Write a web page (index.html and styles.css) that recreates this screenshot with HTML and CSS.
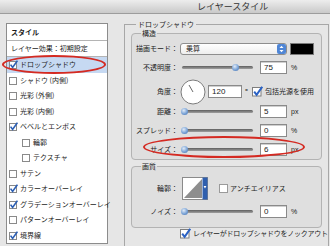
FILE: index.html
```html
<!DOCTYPE html>
<html lang="ja">
<head>
<meta charset="utf-8">
<title>レイヤースタイル</title>
<link rel="stylesheet" href="styles.css">
</head>
<body>
<div class="titlebar"><span class="title">レイヤースタイル</span></div>
<div class="main">
  <div class="side">
    <div class="side-head">スタイル</div>
    <div class="side-preset">レイヤー効果：初期設定</div>
    <ul class="fx">
      <li class="fx-item sel"><svg class="cb" viewBox="0 0 9 9"><rect x="0.5" y="1.5" width="7" height="7" fill="#fff" stroke="#8a8a8a"/><path d="M1.6 4.6 L3.6 7.4 L8.4 0.6" fill="none" stroke="#2c5fb4" stroke-width="1.6"/></svg>ドロップシャドウ</li>
      <li class="fx-item"><svg class="cb" viewBox="0 0 9 9"><rect x="0.5" y="1.5" width="7" height="7" fill="#fff" stroke="#8a8a8a"/></svg>シャドウ (内側)</li>
      <li class="fx-item"><svg class="cb" viewBox="0 0 9 9"><rect x="0.5" y="1.5" width="7" height="7" fill="#fff" stroke="#8a8a8a"/></svg>光彩 (外側)</li>
      <li class="fx-item"><svg class="cb" viewBox="0 0 9 9"><rect x="0.5" y="1.5" width="7" height="7" fill="#fff" stroke="#8a8a8a"/></svg>光彩 (内側)</li>
      <li class="fx-item"><svg class="cb" viewBox="0 0 9 9"><rect x="0.5" y="1.5" width="7" height="7" fill="#fff" stroke="#8a8a8a"/><path d="M1.6 4.6 L3.6 7.4 L8.4 0.6" fill="none" stroke="#2c5fb4" stroke-width="1.6"/></svg>ベベルとエンボス</li>
      <li class="fx-item sub"><svg class="cb" viewBox="0 0 9 9"><rect x="0.5" y="1.5" width="7" height="7" fill="#fff" stroke="#8a8a8a"/></svg>輪郭</li>
      <li class="fx-item sub"><svg class="cb" viewBox="0 0 9 9"><rect x="0.5" y="1.5" width="7" height="7" fill="#fff" stroke="#8a8a8a"/></svg>テクスチャ</li>
      <li class="fx-item"><svg class="cb" viewBox="0 0 9 9"><rect x="0.5" y="1.5" width="7" height="7" fill="#fff" stroke="#8a8a8a"/></svg>サテン</li>
      <li class="fx-item"><svg class="cb" viewBox="0 0 9 9"><rect x="0.5" y="1.5" width="7" height="7" fill="#fff" stroke="#8a8a8a"/><path d="M1.6 4.6 L3.6 7.4 L8.4 0.6" fill="none" stroke="#2c5fb4" stroke-width="1.6"/></svg>カラーオーバーレイ</li>
      <li class="fx-item"><svg class="cb" viewBox="0 0 9 9"><rect x="0.5" y="1.5" width="7" height="7" fill="#fff" stroke="#8a8a8a"/><path d="M1.6 4.6 L3.6 7.4 L8.4 0.6" fill="none" stroke="#2c5fb4" stroke-width="1.6"/></svg>グラデーションオーバーレイ</li>
      <li class="fx-item"><svg class="cb" viewBox="0 0 9 9"><rect x="0.5" y="1.5" width="7" height="7" fill="#fff" stroke="#8a8a8a"/></svg>パターンオーバーレイ</li>
      <li class="fx-item"><svg class="cb" viewBox="0 0 9 9"><rect x="0.5" y="1.5" width="7" height="7" fill="#fff" stroke="#8a8a8a"/><path d="M1.6 4.6 L3.6 7.4 L8.4 0.6" fill="none" stroke="#2c5fb4" stroke-width="1.6"/></svg>境界線</li>
    </ul>
    <div class="ring ring-side"></div>
  </div>

  <fieldset class="group">
    <legend>ドロップシャドウ</legend>
    <fieldset class="box struct">
      <legend>構造</legend>
      <div class="row r-mode">
        <span class="lbl">描画モード：</span>
        <div class="ctl">
          <div class="select"><span>乗算</span>
            <svg class="stepper" viewBox="0 0 9 10"><rect x="0" y="0" width="9" height="10" rx="2" fill="#4f86d6"/><path d="M2.5 4 L4.5 1.8 L6.5 4 Z M2.5 6 L4.5 8.2 L6.5 6 Z" fill="#fff"/></svg>
          </div>
          <div class="swatch"></div>
        </div>
      </div>
      <div class="row r-opacity">
        <span class="lbl">不透明度：</span>
        <div class="ctl">
          <div class="slider"><span class="thumb" style="left:75%"></span></div>
          <div class="num">75</div><span class="unit">%</span>
        </div>
      </div>
      <div class="row r-angle">
        <span class="lbl">角度：</span>
        <div class="ctl">
          <svg class="dial" viewBox="0 0 26 26"><circle cx="13" cy="13" r="12" fill="#fff" stroke="#7c7c7c"/><line x1="13" y1="13" x2="9" y2="6" stroke="#6a6a6a" stroke-width="1"/></svg>
          <div class="num wide">120</div><span class="deg">°</span>
          <svg class="cbl" viewBox="0 0 11 11"><rect x="0.5" y="1.5" width="8.5" height="8.5" fill="#fff" stroke="#7e7e7e"/><path d="M2.2 5.6 L4.6 8.8 L10.2 0.8" fill="none" stroke="#2b62c4" stroke-width="2"/></svg>
          <span class="cbtext">包括光源を使用</span>
        </div>
      </div>
      <div class="row r-dist">
        <span class="lbl">距離：</span>
        <div class="ctl">
          <div class="slider"><span class="thumb" style="left:4%"></span></div>
          <div class="num">5</div><span class="unit">px</span>
        </div>
      </div>
      <div class="row r-spread">
        <span class="lbl">スプレッド：</span>
        <div class="ctl">
          <div class="slider"><span class="thumb" style="left:4%"></span></div>
          <div class="num">0</div><span class="unit">%</span>
        </div>
      </div>
      <div class="row r-size">
        <span class="lbl">サイズ：</span>
        <div class="ctl">
          <div class="slider"><span class="thumb" style="left:4%"></span></div>
          <div class="num">6</div><span class="unit">px</span>
        </div>
        <div class="ring ring-size"></div>
      </div>
    </fieldset>

    <fieldset class="box quality">
      <legend>画質</legend>
      <div class="row r-contour">
        <span class="lbl">輪郭：</span>
        <div class="ctl">
          <svg class="contour" viewBox="0 0 26 23"><rect x="0.5" y="0.5" width="25" height="22" fill="#fff" stroke="#8a8a8a"/><path d="M2 21 L20 2 L20 21 Z" fill="#8e8e8e"/><rect x="20.5" y="0.5" width="5" height="22" fill="#2f5fae"/><path d="M21.6 9 L24.4 9 L23 11.5 Z" fill="#fff"/></svg>
          <svg class="cbs" viewBox="0 0 9 9"><rect x="0.5" y="0.5" width="8" height="8" fill="#fff" stroke="#9a9a9a"/></svg>
          <span class="cbtext">アンチエイリアス</span>
        </div>
      </div>
      <div class="row r-noise">
        <span class="lbl">ノイズ：</span>
        <div class="ctl">
          <div class="slider"><span class="thumb" style="left:4%"></span></div>
          <div class="num">0</div><span class="unit">%</span>
        </div>
      </div>
    </fieldset>

    <div class="knock">
      <svg class="cbl" viewBox="0 0 11 11"><rect x="0.5" y="1.5" width="8.5" height="8.5" fill="#fff" stroke="#7e7e7e"/><path d="M2.2 5.6 L4.6 8.8 L10.2 0.8" fill="none" stroke="#2b62c4" stroke-width="2"/></svg>
      <span class="cbtext">レイヤーがドロップシャドウをノックアウト</span>
    </div>
  </fieldset>
</div>
</body>
</html>
```

FILE: styles.css
```css
* { box-sizing: border-box; margin: 0; padding: 0; }

body {
  width: 330px;
  height: 246px;
  overflow: hidden;
  background: #e6e6e6;
  font-family: "Noto Sans CJK JP", "Noto Sans", sans-serif;
  font-size: 7px;
  line-height: 1;
  color: #1c1c1c;
}

.titlebar {
  height: 14px;
  background: linear-gradient(#ededed, #c9c9c9);
  border-bottom: 1px solid #9c9c9c;
  padding-left: 197px;
  display: flex;
  align-items: center;
}
.title { font-size: 9px; color: #333; }

.main { display: flex; align-items: flex-start; }

/* left styles list */
.side {
  position: relative;
  margin: 9px 0 0 6px;
  width: 102px;
  height: 221px;
  background: #fff;
  border: 1px solid #8c8c8c;
}
.side-head {
  height: 17px;
  padding-left: 4px;
  display: flex;
  align-items: center;
  border-bottom: 1px solid #b4b4b4;
  font-weight: bold;
}
.side-preset {
  height: 16px;
  padding-left: 4px;
  display: flex;
  align-items: center;
  border-bottom: 1px solid #b4b4b4;
}
.fx { list-style: none; }
.fx-item {
  height: 15.5px;
  display: flex;
  align-items: center;
  gap: 2px;
  padding-left: 2px;
  white-space: nowrap;
}
.fx-item.sel { background: #c6d9f2; }
.fx-item.sub { padding-left: 15px; }
.cb { width: 9px; height: 9px; flex: none; }

.ring {
  position: absolute;
  border: 2px solid #d42a22;
  border-radius: 50%;
  pointer-events: none;
}
.ring-side { left: -5px; top: 31px; width: 104px; height: 19px; }

/* right side */
.group {
  margin: 6px 0 0 16px;
  width: 205px;
  height: 226px;
  border: 1px solid #a7a7a7;
  border-bottom: none;
  padding: 0 0 0 6px;
}
.group > legend {
  margin-left: 5px;
  padding: 0 2px;
  line-height: 9px;
}

.box {
  width: 191px;
  border: 1px solid #b3b3b3;
  border-radius: 4px;
  background: #dfdfdf;
}
.box > legend {
  margin-left: 9px;
  padding: 0 1px;
  line-height: 9px;
}
.struct {
  display: grid;
  row-gap: 3px;
  padding: 2.5px 0 1px;
}
.quality {
  margin-top: 2.5px;
  display: grid;
  row-gap: 3px;
  padding: 5.5px 0 7px;
}

.row {
  position: relative;
  display: grid;
  grid-template-columns: 46px auto;
  column-gap: 2px;
  align-items: center;
  height: 16px;
}
.r-angle { height: 22px; }
.r-contour { height: 24px; }

.lbl { text-align: right; white-space: nowrap; }
.ctl { display: flex; align-items: center; }

.select {
  width: 107px;
  height: 12px;
  border: 1px solid #8e8e8e;
  border-radius: 3px;
  background: linear-gradient(#ffffff, #eeeeee);
  display: flex;
  align-items: center;
  justify-content: space-between;
  padding: 0 0 0 5px;
}
.stepper { width: 9px; height: 10px; }
.swatch {
  margin-left: 3px;
  width: 24px;
  height: 12px;
  background: #000;
  border: 1px solid #7a7a7a;
}

.slider {
  position: relative;
  margin-left: 2px;
  width: 71px;
  height: 3px;
  border-radius: 2px;
  background: linear-gradient(#5f5f5f, #a0a0a0);
}
.thumb {
  position: absolute;
  top: -2px;
  width: 7px;
  height: 7px;
  margin-left: -3.5px;
  border-radius: 50%;
  background: radial-gradient(circle at 40% 35%, #e2ecf8, #7aa3d6 55%, #3d6aae);
}

.num {
  margin-left: 7px;
  width: 27px;
  height: 13px;
  border: 1px solid #8a8a8a;
  box-shadow: inset 0 1px 0 #cfcfcf;
  background: #fff;
  font-family: "Liberation Sans", "DejaVu Sans", sans-serif;
  font-size: 8px;
  display: flex;
  align-items: center;
  padding-left: 3px;
}
.num.wide { margin-left: 2px; width: 34px; }
.unit { margin-left: 4px; font-family: "Liberation Sans", sans-serif; font-size: 7px; }
.deg { margin-left: 3px; font-size: 8px; }

.dial { width: 26px; height: 26px; flex: none; }
.cbl { width: 11px; height: 11px; margin-left: 4px; flex: none; }
.cbs { width: 9px; height: 9px; margin-left: 11px; flex: none; }
.cbtext { margin-left: 2px; white-space: nowrap; }

.contour { width: 26px; height: 23px; margin-left: 2px; flex: none; }

.ring-size { left: 11px; top: -6px; width: 162px; height: 22px; }

.knock {
  display: flex;
  align-items: center;
  height: 12px;
  padding-left: 49px;
}
.knock .cbl { margin-left: 0; }
.knock .cbtext { letter-spacing: -0.25px; }
```
